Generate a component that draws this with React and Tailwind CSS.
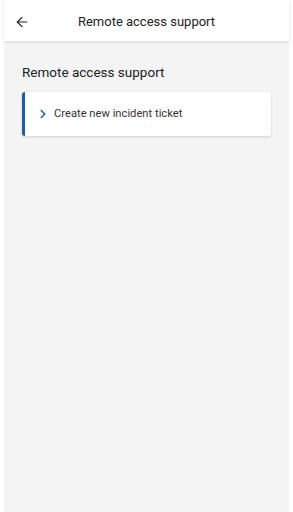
import { ArrowLeft, ChevronRight } from 'lucide-react';

export default function App() {
  return (
    <div className="w-[293px] h-[512px] bg-white px-[4px] flex flex-col font-['Roboto',sans-serif] overflow-hidden">
      {/* Header */}
      <header className="h-[41px] pt-[3px] bg-white flex items-center relative z-10 shadow-[0_1px_3px_rgba(0,0,0,0.12)] shrink-0">
        <button className="w-[36px] flex justify-center text-[#222]">
          <ArrowLeft size={16} strokeWidth={1.8} />
        </button>
        <h1 className="flex-1 text-center text-[13px] text-[#222] pr-[36px]">Remote access support</h1>
      </header>

      {/* Content */}
      <main className="flex-1 bg-[#f4f4f4] px-[18px] pt-[22px]">
        <h2 className="text-[13.5px] leading-[18px] text-[#222] mb-[11px]">Remote access support</h2>
        <div className="h-[44px] bg-white rounded-[3px] border-l-[3px] border-[#1a5fa8] shadow-[0_1px_3px_rgba(0,0,0,0.15)] flex items-center pl-[11px] w-[249px]">
          <ChevronRight size={14} strokeWidth={2.6} className="text-[#1a5fa8]" />
          <span className="ml-[4px] text-[11.2px] text-[#333]">Create new incident ticket</span>
        </div>
      </main>
    </div>
  );
}
